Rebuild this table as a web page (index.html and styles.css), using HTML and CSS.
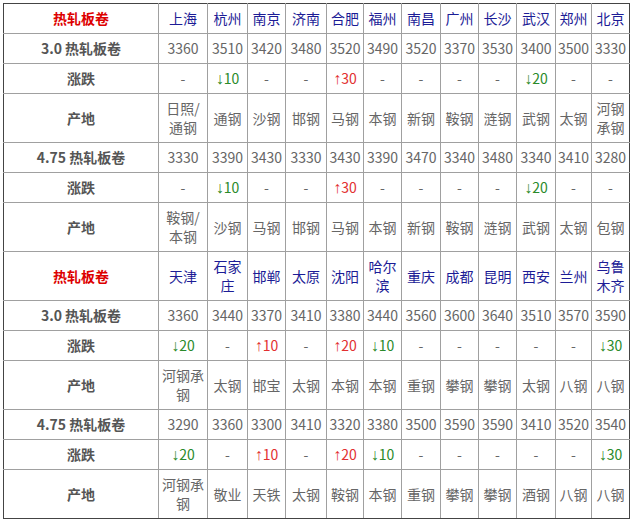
FILE: index.html
```html
<!DOCTYPE html>
<html lang="zh">
<head>
<meta charset="utf-8">
<title>热轧板卷价格</title>
<link rel="stylesheet" href="styles.css">
</head>
<body>
<table class="price">
<colgroup>
<col class="c0"><col class="c1"><col class="c2"><col class="c3"><col class="c4"><col class="c5"><col class="c6"><col class="c7"><col class="c8"><col class="c9"><col class="c10"><col class="c11"><col class="c12">
</colgroup>
<tbody>
<tr>
<td class="head">热轧板卷</td>
<td class="city">上海</td><td class="city">杭州</td><td class="city">南京</td><td class="city">济南</td><td class="city">合肥</td><td class="city">福州</td><td class="city">南昌</td><td class="city">广州</td><td class="city">长沙</td><td class="city">武汉</td><td class="city">郑州</td><td class="city">北京</td>
</tr>
<tr>
<td class="label">3.0 热轧板卷</td>
<td>3360</td><td>3510</td><td>3420</td><td>3480</td><td>3520</td><td>3490</td><td>3520</td><td>3370</td><td>3530</td><td>3400</td><td>3500</td><td>3330</td>
</tr>
<tr>
<td class="label">涨跌</td>
<td>-</td><td class="down"><span class="ar">↓</span>10</td><td>-</td><td>-</td><td class="up"><span class="ar">↑</span>30</td><td>-</td><td>-</td><td>-</td><td>-</td><td class="down"><span class="ar">↓</span>20</td><td>-</td><td>-</td>
</tr>
<tr class="tall">
<td class="label">产地</td>
<td>日照/<br>通钢</td><td>通钢</td><td>沙钢</td><td>邯钢</td><td>马钢</td><td>本钢</td><td>新钢</td><td>鞍钢</td><td>涟钢</td><td>武钢</td><td>太钢</td><td>河钢<br>承钢</td>
</tr>
<tr>
<td class="label">4.75 热轧板卷</td>
<td>3330</td><td>3390</td><td>3430</td><td>3330</td><td>3430</td><td>3390</td><td>3470</td><td>3340</td><td>3480</td><td>3340</td><td>3410</td><td>3280</td>
</tr>
<tr>
<td class="label">涨跌</td>
<td>-</td><td class="down"><span class="ar">↓</span>10</td><td>-</td><td>-</td><td class="up"><span class="ar">↑</span>30</td><td>-</td><td>-</td><td>-</td><td>-</td><td class="down"><span class="ar">↓</span>20</td><td>-</td><td>-</td>
</tr>
<tr class="tall">
<td class="label">产地</td>
<td>鞍钢/<br>本钢</td><td>沙钢</td><td>马钢</td><td>邯钢</td><td>马钢</td><td>本钢</td><td>新钢</td><td>鞍钢</td><td>涟钢</td><td>武钢</td><td>太钢</td><td>包钢</td>
</tr>
<tr class="tall">
<td class="head">热轧板卷</td>
<td class="city">天津</td><td class="city">石家<br>庄</td><td class="city">邯郸</td><td class="city">太原</td><td class="city">沈阳</td><td class="city">哈尔<br>滨</td><td class="city">重庆</td><td class="city">成都</td><td class="city">昆明</td><td class="city">西安</td><td class="city">兰州</td><td class="city">乌鲁<br>木齐</td>
</tr>
<tr>
<td class="label">3.0 热轧板卷</td>
<td>3360</td><td>3440</td><td>3370</td><td>3410</td><td>3380</td><td>3440</td><td>3560</td><td>3600</td><td>3640</td><td>3510</td><td>3570</td><td>3590</td>
</tr>
<tr>
<td class="label">涨跌</td>
<td class="down"><span class="ar">↓</span>20</td><td>-</td><td class="up"><span class="ar">↑</span>10</td><td>-</td><td class="up"><span class="ar">↑</span>20</td><td class="down"><span class="ar">↓</span>10</td><td>-</td><td>-</td><td>-</td><td>-</td><td>-</td><td class="down"><span class="ar">↓</span>30</td>
</tr>
<tr class="tall">
<td class="label">产地</td>
<td>河钢承<br>钢</td><td>太钢</td><td>邯宝</td><td>太钢</td><td>本钢</td><td>本钢</td><td>重钢</td><td>攀钢</td><td>攀钢</td><td>太钢</td><td>八钢</td><td>八钢</td>
</tr>
<tr>
<td class="label">4.75 热轧板卷</td>
<td>3290</td><td>3360</td><td>3300</td><td>3410</td><td>3320</td><td>3380</td><td>3500</td><td>3590</td><td>3590</td><td>3410</td><td>3520</td><td>3540</td>
</tr>
<tr>
<td class="label">涨跌</td>
<td class="down"><span class="ar">↓</span>20</td><td>-</td><td class="up"><span class="ar">↑</span>10</td><td>-</td><td class="up"><span class="ar">↑</span>20</td><td class="down"><span class="ar">↓</span>10</td><td>-</td><td>-</td><td>-</td><td>-</td><td>-</td><td class="down"><span class="ar">↓</span>30</td>
</tr>
<tr class="tall">
<td class="label">产地</td>
<td>河钢承<br>钢</td><td>敬业</td><td>天铁</td><td>太钢</td><td>鞍钢</td><td>本钢</td><td>重钢</td><td>攀钢</td><td>攀钢</td><td>酒钢</td><td>八钢</td><td>八钢</td>
</tr>
</tbody>
</table>
</body>
</html>
```

FILE: styles.css
```css
html, body {
  margin: 0;
  padding: 0;
  background: #ffffff;
}
body {
  padding: 3px 0 0 3px;
  font-family: "Noto Sans CJK SC", "Noto Sans", sans-serif;
  font-size: 14px;
  color: #666666;
}
.price {
  border-collapse: collapse;
  table-layout: fixed;
  width: 627px;
}
.c0 { width: 155px; }
.c1 { width: 49px; }
.c2 { width: 40px; }
.c3 { width: 38px; }
.c4 { width: 41px; }
.c5 { width: 37px; }
.c6 { width: 38px; }
.c7 { width: 39px; }
.c8 { width: 38px; }
.c9 { width: 38px; }
.c10 { width: 39px; }
.c11 { width: 36px; }
.c12 { width: 38px; }
.price td {
  border: 1px solid #a0a0a0;
  padding: 5px 0;
  height: 19px;
  line-height: 19px;
  text-align: center;
  vertical-align: middle;
  white-space: nowrap;
}
.price tr.tall td {
  height: 38px;
}
.price tr:first-child td { border-top-color: #444444; }
.price tr:last-child td { border-bottom-color: #444444; }
.price td:first-child { border-left-color: #444444; }
.price td:last-child { border-right-color: #444444; }
.head {
  color: #dd0000;
  font-weight: bold;
}
.label {
  color: #555555;
  font-weight: bold;
}
.city {
  color: #1c1c96;
}
.down { color: #2a8a2a; }
.up { color: #e23030; }
.ar {
  font-family: "Liberation Sans", sans-serif;
  font-size: 16px;
  line-height: 0;
}
```
